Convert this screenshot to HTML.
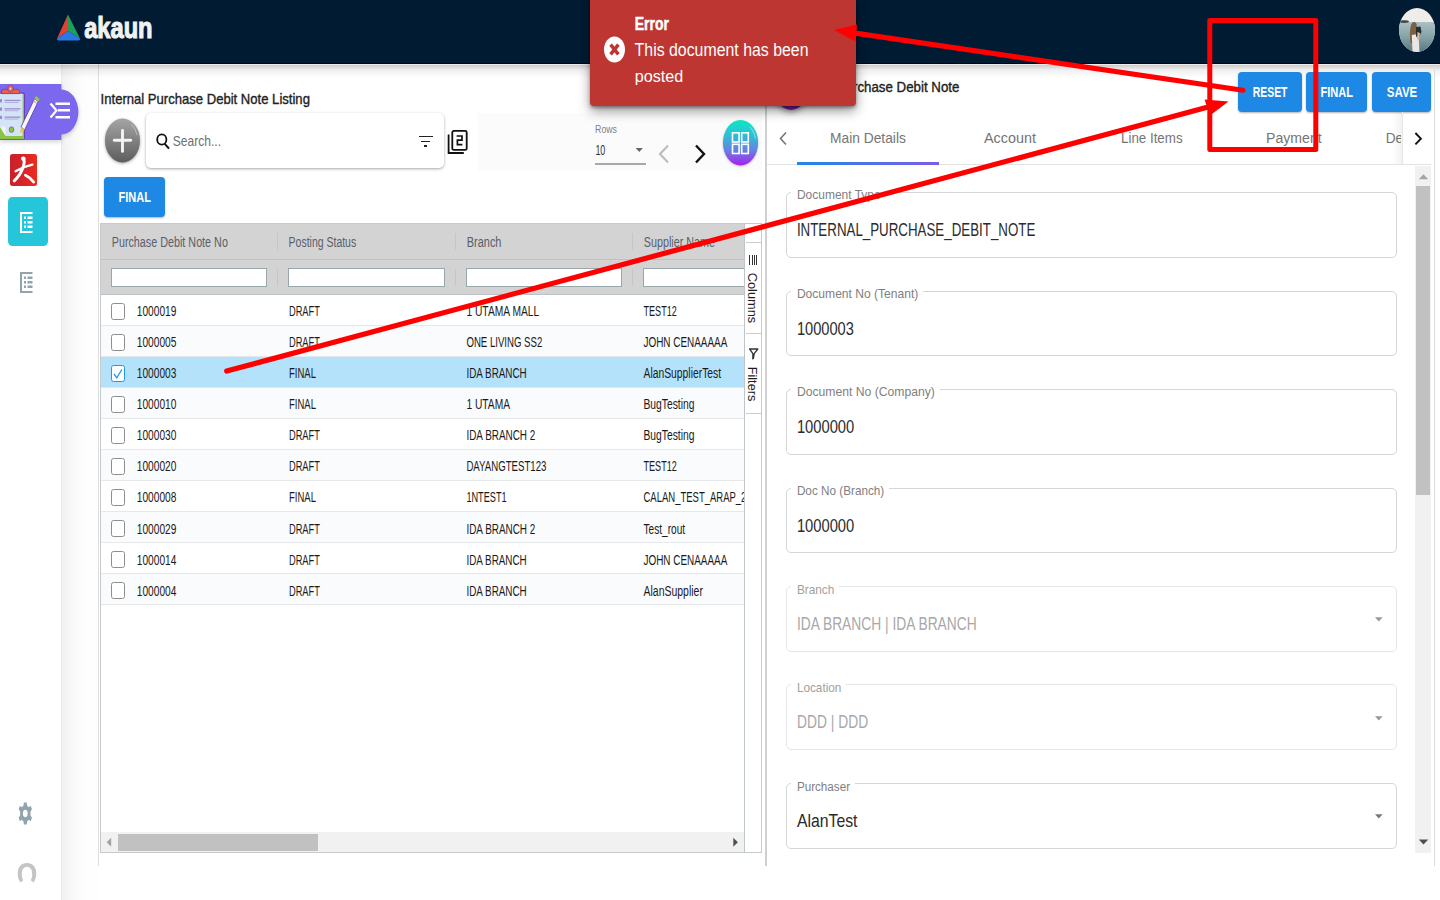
<!DOCTYPE html>
<html><head><meta charset="utf-8"><title>akaun</title>
<style>
html,body{margin:0;padding:0;width:1440px;height:900px;overflow:hidden;background:#fff;}
body{position:relative;font-family:"Liberation Sans",sans-serif;}
div{position:absolute;box-sizing:border-box;}
.t{white-space:nowrap;}
.ts{position:absolute;left:0;top:0;overflow:visible;font-family:"Liberation Sans",sans-serif;white-space:pre;}
</style></head><body>
<div style="left:0.00px;top:0.00px;width:1440.00px;height:900.00px;background:#fff;"></div>
<div style="left:61.00px;top:64.00px;width:37.00px;height:836.00px;background:linear-gradient(to right,#e8e8e8 0px,#f2f2f2 2px,#f6f6f6 8px,#fafafa 14px,#fdfdfd 22px,#fefefe 36px);"></div>
<div style="left:98.00px;top:64.00px;width:1.00px;height:802.00px;background:#dedede;"></div>
<div style="left:0.00px;top:64.00px;width:1440.00px;height:1.00px;background:rgba(80,70,50,0.10);"></div>
<div style="left:0.00px;top:65.00px;width:1440.00px;height:13.00px;background:linear-gradient(to bottom,rgba(0,0,0,0.2),rgba(0,0,0,0.06) 40%,rgba(0,0,0,0));"></div>
<div style="left:0.00px;top:0.00px;width:1440.00px;height:64.00px;background:#011b33;border-bottom:1.2px solid #00061a;box-sizing:border-box;"></div>
<svg style="position:absolute;left:55px;top:12px;" width="28" height="30" viewBox="0 0 28 30" preserveAspectRatio="none">
<polygon points="13,2.6 2,26.5 13,19" fill="#e3412f"/>
<polygon points="13,2.6 25,26.5 13,19" fill="#1e9e58"/>
<path d="M2,26.5 L13,19 L25,26.5 Q25.5,28.5 23.5,28.6 L3.5,28.6 Q1.5,28.5 2,26.5 Z" fill="#2a78e4"/>
</svg>
<svg class="ts" width="1" height="1" style=""><text transform="translate(84.20,38.20) scale(0.9985,1.2500)" font-size="23.704" fill="#f2f2f2" font-weight="bold" stroke="#f2f2f2" stroke-width="0.9">akaun</text></svg>
<svg style="position:absolute;left:1399px;top:8px;" width="36" height="44" viewBox="0 0 36 44" preserveAspectRatio="none">
<defs><clipPath id="av"><ellipse cx="18" cy="22" rx="18" ry="22"/></clipPath>
<linearGradient id="sea" x1="0" y1="0" x2="0" y2="1"><stop offset="0" stop-color="#aac0c4"/><stop offset="0.5" stop-color="#86a2a6"/><stop offset="1" stop-color="#577a7e"/></linearGradient></defs>
<g clip-path="url(#av)">
<rect x="0" y="0" width="36" height="44" fill="#eeede9"/>
<rect x="0" y="14" width="36" height="30" fill="url(#sea)"/>
<ellipse cx="5" cy="13.6" rx="5" ry="1.4" fill="#3d4a43"/>
<path d="M13.4,14.5 Q16.5,13.2 17.6,16 L17.8,22 L16.8,30 L15,36 L11.5,35 L10.8,26 Q11,18 13.4,14.5 Z" fill="#7d5f43"/>
<path d="M12.8,27 L19.5,26 L20.5,44 L13.5,44 Z" fill="#e9e6e4"/>
<path d="M17,19 L21.5,18.5 L22.5,24 L19,31 L17,28 Z" fill="#27302e"/>
<path d="M18.5,24 L21,25 L20,33 L18,31 Z" fill="#d8b79c"/>
</g>
</svg>
<svg style="position:absolute;left:0px;top:84px;filter:drop-shadow(0 2px 2px rgba(0,0,0,0.18));" width="80" height="57" viewBox="0 0 80 57" preserveAspectRatio="none">
<path d="M0,0 L61.4,0 L61.4,5.5 A17,22.5 0 0 1 61.4,50.5 L61.4,56 L0,56 Z" fill="#7b68ee"/>
</svg>
<svg style="position:absolute;left:0px;top:84px;" width="40" height="56" viewBox="0 0 40 56" preserveAspectRatio="none">
<rect x="-6" y="8.6" width="31" height="47" rx="2" fill="#6a3fb0"/>
<rect x="-5" y="10" width="29" height="45" fill="#8bc34a"/>
<rect x="-5" y="9.6" width="27.6" height="42.4" fill="#d2e4f5"/>
<path d="M-5,43 L0,43 L5.5,52 L-5,52 Z" fill="#8bc34a"/>
<path d="M0,42.5 L5.5,42.5 L5.5,51.5 Z" fill="#f4f4f4"/>
<path d="M1.5,9.6 L1.5,7 Q1.5,5.3 4,5.3 L17,5.3 Q19.6,5.3 19.6,7 L19.6,9.6 Z" fill="#e8604f" stroke="#6a3fb0" stroke-width="0.8"/>
<ellipse cx="10.5" cy="4.6" rx="3" ry="3.4" fill="#e8604f" stroke="#6a3fb0" stroke-width="0.6"/>
<ellipse cx="10.5" cy="4.8" rx="0.9" ry="1.2" fill="#d2e4f5"/>
<rect x="-1" y="15.2" width="3" height="3.2" fill="#9a87cc"/><rect x="4.5" y="15.8" width="16" height="1.3" fill="#9b8fd0"/><rect x="4.5" y="18" width="14" height="0.9" fill="#b1a8dc"/>
<rect x="-1" y="23.5" width="3" height="3.2" fill="#9a87cc"/><rect x="4.5" y="24.2" width="16" height="1.3" fill="#9b8fd0"/><rect x="4.5" y="26.3" width="14" height="0.9" fill="#b1a8dc"/>
<rect x="-1" y="31.8" width="3" height="3.2" fill="#9a87cc"/><rect x="4.5" y="32.5" width="16" height="1.3" fill="#9b8fd0"/><rect x="4.5" y="34.6" width="14" height="0.9" fill="#b1a8dc"/>
<ellipse cx="11.5" cy="45.6" rx="2.3" ry="2.8" fill="#8bc34a" stroke="#6a3fb0" stroke-width="0.6"/>
<path d="M34.6,14.6 L38.2,17.6 L24.6,46 L21,43 Z" fill="#f7f7f7" stroke="#6a3fb0" stroke-width="0.9"/>
<path d="M34.6,14.6 L38.2,17.6 L39.6,15 L36,12 Z" fill="#8bd23a"/>
<path d="M33.8,16.2 L37.4,19.2 L36.9,20.3 L33.3,17.3 Z" fill="#c9a27a"/>
<path d="M21,43 L24.6,46 L20.2,49.2 Z" fill="#f5c531"/>
</svg>
<svg style="position:absolute;left:48px;top:100px;" width="24" height="21" viewBox="0 0 24 21" preserveAspectRatio="none">
<polyline points="2.5,3.5 8.5,10.5 2.5,17.5" fill="none" stroke="#fff" stroke-width="2.2"/>
<rect x="7.5" y="2.5" width="14.5" height="2.5" fill="#fff"/>
<rect x="10" y="9" width="12" height="2.5" fill="#fff"/>
<rect x="7.5" y="16" width="14.5" height="2.5" fill="#fff"/>
</svg>
<svg style="position:absolute;left:10px;top:154px;" width="27" height="32" viewBox="0 0 27 32" preserveAspectRatio="none">
<defs><linearGradient id="rg" x1="0" y1="0" x2="1" y2="0"><stop offset="0" stop-color="#c9202a"/><stop offset="0.55" stop-color="#d8252a"/><stop offset="1" stop-color="#ef2b1c"/></linearGradient></defs>
<rect x="0" y="0" width="27" height="32" rx="2.5" fill="url(#rg)"/>
<g fill="none" stroke="#fff" stroke-linecap="round">
<path d="M13.8,5 Q15,9 12.6,14.5 Q10,21.5 4.2,26.8" stroke-width="3"/>
<path d="M5.6,17.2 Q13,12.6 22.4,10.6" stroke-width="2.4"/>
<path d="M15.4,21.2 Q20.5,23.5 23.6,28" stroke-width="2.8"/>
</g>
<ellipse cx="13.3" cy="4.6" rx="2.3" ry="2.2" fill="#fff"/>
</svg>
<div style="left:8.00px;top:197.00px;width:40.00px;height:49.00px;background:#26c6da;border-radius:4px/5px;"></div>
<svg style="position:absolute;left:19.6px;top:212px;" width="13.0" height="21" viewBox="0 0 13.0 21" preserveAspectRatio="none">
<rect x="0" y="0" width="2" height="21" fill="#ffffff"/>
<rect x="0" y="0" width="12.5" height="2" fill="#ffffff"/>
<rect x="0" y="19" width="12.5" height="2" fill="#ffffff"/>
<rect x="4" y="4.5" width="2" height="2.5" fill="#ffffff"/><rect x="7.5" y="4.5" width="5" height="2.5" fill="#ffffff"/>
<rect x="4" y="9" width="2" height="2.5" fill="#ffffff"/><rect x="7.5" y="9" width="5" height="2.5" fill="#ffffff"/>
<rect x="4" y="13.5" width="2" height="2.5" fill="#ffffff"/><rect x="7.5" y="13.5" width="5" height="2.5" fill="#ffffff"/>
</svg>
<svg style="position:absolute;left:19.6px;top:272px;" width="13.0" height="21" viewBox="0 0 13.0 21" preserveAspectRatio="none">
<rect x="0" y="0" width="2" height="21" fill="#90a4ae"/>
<rect x="0" y="0" width="12.5" height="2" fill="#90a4ae"/>
<rect x="0" y="19" width="12.5" height="2" fill="#90a4ae"/>
<rect x="4" y="4.5" width="2" height="2.5" fill="#90a4ae"/><rect x="7.5" y="4.5" width="5" height="2.5" fill="#90a4ae"/>
<rect x="4" y="9" width="2" height="2.5" fill="#90a4ae"/><rect x="7.5" y="9" width="5" height="2.5" fill="#90a4ae"/>
<rect x="4" y="13.5" width="2" height="2.5" fill="#90a4ae"/><rect x="7.5" y="13.5" width="5" height="2.5" fill="#90a4ae"/>
</svg>
<svg style="position:absolute;left:17px;top:801px;" width="17" height="25" viewBox="0 0 17 25" preserveAspectRatio="none">
<g transform="translate(8.3,12.5) scale(0.82,1.32)">
<path d="M-1.7,-8.3 L1.7,-8.3 L2.3,-5.9 L4.4,-4.8 L6.6,-5.9 L8.1,-3.3 L6.3,-1.6 L6.3,1.6 L8.1,3.3 L6.6,5.9 L4.4,4.8 L2.3,5.9 L1.7,8.3 L-1.7,8.3 L-2.3,5.9 L-4.4,4.8 L-6.6,5.9 L-8.1,3.3 L-6.3,1.6 L-6.3,-1.6 L-8.1,-3.3 L-6.6,-5.9 L-4.4,-4.8 L-2.3,-5.9 Z" fill="#90a4ae"/>
<circle cx="0" cy="0" r="2.9" fill="#fff"/>
</g></svg>
<svg style="position:absolute;left:17px;top:862px;" width="20" height="23" viewBox="0 0 20 23" preserveAspectRatio="none">
<path fill-rule="evenodd" d="M10,1 C15.5,1 19.3,5 19.3,11.5 C19.3,15.5 18,18.5 16.5,20.5 L13.8,18.2 C14.8,16.5 15.2,14 15.2,12 C15.2,7.8 13.2,4.8 10,4.8 C6.8,4.8 4.8,7.8 4.8,12 C4.8,14 5.2,16.5 6.2,18.2 L3.5,20.5 C2,18.5 0.7,15.5 0.7,11.5 C0.7,5 4.5,1 10,1 Z" fill="#c4c4c4"/>
</svg>
<svg class="ts" width="1" height="1" style=""><text transform="translate(100.60,104.10) scale(1.0821,1.2500)" font-size="12.093" fill="#222" stroke="#222" stroke-width="0.3">Internal Purchase Debit Note Listing</text></svg>
<div style="left:478.00px;top:113.00px;width:284.00px;height:58.00px;background:#fbfbfb;"></div>
<svg style="position:absolute;left:104px;top:117px;filter:drop-shadow(0 1px 1.5px rgba(0,0,0,0.35));" width="38" height="47" viewBox="0 0 38 47" preserveAspectRatio="none">
<defs><linearGradient id="ag" x1="0" y1="0" x2="0" y2="1"><stop offset="0" stop-color="#a5a5a5"/><stop offset="1" stop-color="#5d5d5d"/></linearGradient></defs>
<ellipse cx="18.5" cy="23.5" rx="17.5" ry="22" fill="url(#ag)"/>
<path d="M27.3,7.4 Q31.5,11 33.3,18.2" fill="none" stroke="#e0e0e0" stroke-width="0.7" opacity="0.8"/>
<line x1="18.5" y1="13.4" x2="18.5" y2="34.4" stroke="#f4f4f4" stroke-width="2.9" stroke-linecap="round"/>
<line x1="10.3" y1="23.3" x2="26.7" y2="23.3" stroke="#f4f4f4" stroke-width="2.9" stroke-linecap="round"/>
</svg>
<div style="left:146.30px;top:113.20px;width:297.70px;height:54.40px;background:#fff;border-radius:5px;box-shadow:0 1px 3px rgba(0,0,0,0.35);"></div>
<svg style="position:absolute;left:155px;top:133px;" width="17" height="17" viewBox="0 0 17 17" preserveAspectRatio="none">
<ellipse cx="6.8" cy="6.5" rx="4.6" ry="5.2" fill="none" stroke="#111" stroke-width="1.8"/>
<line x1="9.8" y1="10.8" x2="14" y2="15.6" stroke="#111" stroke-width="2"/>
</svg>
<svg class="ts" width="1" height="1" style=""><text transform="translate(172.80,146.10) scale(0.9964,1.2500)" font-size="12.093" fill="#707070">Search...</text></svg>
<div style="left:419.00px;top:136.10px;width:14.00px;height:1.30px;background:#222;"></div>
<div style="left:421.40px;top:140.70px;width:9.10px;height:1.20px;background:#222;"></div>
<div style="left:424.30px;top:145.30px;width:3.20px;height:1.30px;background:#222;"></div>
<svg style="position:absolute;left:447px;top:129px;" width="22" height="26" viewBox="0 0 22 26" preserveAspectRatio="none">
<path d="M1.6,5.5 L1.6,24 L16.8,24" fill="none" stroke="#111" stroke-width="1.8"/>
<rect x="5.3" y="1.9" width="14.4" height="19" rx="1.5" fill="none" stroke="#111" stroke-width="1.8"/>
<path d="M9.6,7 L15,7 L15,11.2 L10.4,11.2 L10.4,15.6 L15.4,15.6" fill="none" stroke="#111" stroke-width="1.7"/>
</svg>
<svg class="ts" width="1" height="1" style=""><text transform="translate(595.10,132.90) scale(1.0320,1.2500)" font-size="8.489" fill="#808080">Rows</text></svg>
<svg class="ts" width="1" height="1" style=""><text transform="translate(595.40,154.70) scale(0.7236,1.2500)" font-size="12.326" fill="#333">10</text></svg>
<svg style="position:absolute;left:635px;top:147px;" width="9" height="6" viewBox="0 0 9 6" preserveAspectRatio="none"><polygon points="0.7,1 7.8,1 4.25,5" fill="#666"/></svg>
<div style="left:595.10px;top:163.30px;width:50.80px;height:1.30px;background:#a8a8a8;"></div>
<svg style="position:absolute;left:657px;top:143px;" width="14" height="23" viewBox="0 0 14 23" preserveAspectRatio="none"><polyline points="11,2.5 3,11 11,19.5" fill="none" stroke="#bdbdbd" stroke-width="2.2"/></svg>
<svg style="position:absolute;left:693px;top:143px;" width="14" height="23" viewBox="0 0 14 23" preserveAspectRatio="none"><polyline points="3,2.5 11,11 3,19.5" fill="none" stroke="#111" stroke-width="2.4"/></svg>
<svg style="position:absolute;left:721px;top:119px;filter:drop-shadow(0 1px 1px rgba(0,0,0,0.22));" width="39" height="48" viewBox="0 0 39 48" preserveAspectRatio="none">
<defs><linearGradient id="gg" x1="0" y1="0" x2="0" y2="1"><stop offset="0" stop-color="#0aeac6"/><stop offset="0.38" stop-color="#33b8d6"/><stop offset="0.68" stop-color="#6a7ee2"/><stop offset="1" stop-color="#a81ff0"/></linearGradient></defs>
<ellipse cx="19.5" cy="23.7" rx="17.6" ry="22.7" fill="url(#gg)"/>
<path d="M28.5,7.8 Q33,11.5 34.4,19.6" fill="none" stroke="#a8f8f0" stroke-width="0.9" opacity="0.8"/>
<rect x="11.5" y="13.8" width="6.6" height="9.2" fill="none" stroke="#fff" stroke-width="1.6"/>
<rect x="20.7" y="13.8" width="6.6" height="9.2" fill="none" stroke="#fff" stroke-width="1.6"/>
<rect x="11.5" y="25.3" width="6.6" height="9.2" fill="none" stroke="#fff" stroke-width="1.6"/>
<rect x="20.7" y="25.3" width="6.6" height="9.2" fill="none" stroke="#fff" stroke-width="1.6"/>
</svg>
<div style="left:104.00px;top:177.20px;width:61.30px;height:39.70px;background:#1e88e5;border-radius:4px;box-shadow:0 1px 2px rgba(0,0,0,0.3);"></div>
<svg class="ts" width="1" height="1" style=""><text transform="translate(118.60,201.60) scale(0.9097,1.2500)" font-size="12.093" fill="#fff" font-weight="bold">FINAL</text></svg>
<div style="left:100.40px;top:222.80px;width:661.90px;height:630.20px;background:#fff;border:1px solid #c4cacd;box-sizing:border-box;"></div>
<div style="left:101.40px;top:223.80px;width:643.00px;height:71.10px;background:#d3d3d3;"></div>
<div style="left:101.40px;top:259.00px;width:643.00px;height:1.20px;background:#bcc3c6;"></div>
<div style="left:101.40px;top:294.20px;width:643.00px;height:1.00px;background:#bcc3c6;"></div>
<div style="left:276.90px;top:233.00px;width:1.00px;height:16.50px;background:#c4c6c8;"></div>
<div style="left:276.90px;top:269.00px;width:1.00px;height:16.50px;background:#c4c6c8;"></div>
<div style="left:455.10px;top:233.00px;width:1.00px;height:16.50px;background:#c4c6c8;"></div>
<div style="left:455.10px;top:269.00px;width:1.00px;height:16.50px;background:#c4c6c8;"></div>
<div style="left:632.00px;top:233.00px;width:1.00px;height:16.50px;background:#c4c6c8;"></div>
<div style="left:632.00px;top:269.00px;width:1.00px;height:16.50px;background:#c4c6c8;"></div>
<svg class="ts" width="1" height="1" style=""><text transform="translate(111.70,247.10) scale(0.9367,1.2500)" font-size="11.512" fill="#59606a">Purchase Debit Note No</text></svg>
<svg class="ts" width="1" height="1" style=""><text transform="translate(288.60,247.10) scale(0.9118,1.2500)" font-size="11.512" fill="#59606a">Posting Status</text></svg>
<svg class="ts" width="1" height="1" style=""><text transform="translate(466.80,247.10) scale(0.9509,1.2500)" font-size="11.512" fill="#59606a">Branch</text></svg>
<svg class="ts" width="1" height="1" style=""><text transform="translate(643.70,247.10) scale(0.9376,1.2500)" font-size="11.512" fill="#59606a">Supplier Name</text></svg>
<div style="left:110.90px;top:268.30px;width:155.80px;height:18.30px;background:#fff;border:1.3px solid #98a7a9;box-sizing:border-box;"></div>
<div style="left:287.80px;top:268.30px;width:157.10px;height:18.30px;background:#fff;border:1.3px solid #98a7a9;box-sizing:border-box;"></div>
<div style="left:466.00px;top:268.30px;width:155.80px;height:18.30px;background:#fff;border:1.3px solid #98a7a9;box-sizing:border-box;"></div>
<div style="left:642.90px;top:268.30px;width:101.50px;height:18.30px;background:#fff;border:1.3px solid #98a7a9;box-sizing:border-box;border-right:none;"></div>
<div style="left:101.4px;top:295px;width:643px;height:320px;overflow:hidden;">
<div style="left:0.00px;top:0.00px;width:643.00px;height:31.03px;background:#ffffff;"></div>
<div style="left:0.00px;top:30.03px;width:643.00px;height:1.00px;background:#e6e8ea;"></div>
<div style="left:0.00px;top:31.03px;width:643.00px;height:31.03px;background:#fafbfd;"></div>
<div style="left:0.00px;top:61.06px;width:643.00px;height:1.00px;background:#e6e8ea;"></div>
<div style="left:0.00px;top:62.06px;width:643.00px;height:31.03px;background:#b4e2fb;"></div>
<div style="left:0.00px;top:92.09px;width:643.00px;height:1.00px;background:#e6e8ea;"></div>
<div style="left:0.00px;top:93.09px;width:643.00px;height:31.03px;background:#fafbfd;"></div>
<div style="left:0.00px;top:123.12px;width:643.00px;height:1.00px;background:#e6e8ea;"></div>
<div style="left:0.00px;top:124.12px;width:643.00px;height:31.03px;background:#ffffff;"></div>
<div style="left:0.00px;top:154.15px;width:643.00px;height:1.00px;background:#e6e8ea;"></div>
<div style="left:0.00px;top:155.15px;width:643.00px;height:31.03px;background:#fafbfd;"></div>
<div style="left:0.00px;top:185.18px;width:643.00px;height:1.00px;background:#e6e8ea;"></div>
<div style="left:0.00px;top:186.18px;width:643.00px;height:31.03px;background:#ffffff;"></div>
<div style="left:0.00px;top:216.21px;width:643.00px;height:1.00px;background:#e6e8ea;"></div>
<div style="left:0.00px;top:217.21px;width:643.00px;height:31.03px;background:#fafbfd;"></div>
<div style="left:0.00px;top:247.24px;width:643.00px;height:1.00px;background:#e6e8ea;"></div>
<div style="left:0.00px;top:248.24px;width:643.00px;height:31.03px;background:#ffffff;"></div>
<div style="left:0.00px;top:278.27px;width:643.00px;height:1.00px;background:#e6e8ea;"></div>
<div style="left:0.00px;top:279.27px;width:643.00px;height:31.03px;background:#fafbfd;"></div>
<div style="left:0.00px;top:309.30px;width:643.00px;height:1.00px;background:#e6e8ea;"></div>
</div>
<div style="left:111.20px;top:302.60px;width:14.20px;height:17.40px;border:1.3px solid #8e8e8e;border-radius:2.5px;box-sizing:border-box;background:#fff;"></div>
<svg class="ts" width="1" height="1" style=""><text transform="translate(136.80,316.30) scale(0.8922,1.2500)" font-size="11.396" fill="#1a1a1a">1000019</text></svg>
<svg class="ts" width="1" height="1" style=""><text transform="translate(289.00,316.30) scale(0.8131,1.2500)" font-size="11.396" fill="#1a1a1a">DRAFT</text></svg>
<svg class="ts" width="1" height="1" style=""><text transform="translate(466.40,316.30) scale(0.9017,1.2500)" font-size="11.396" fill="#1a1a1a">1 UTAMA MALL</text></svg>
<div style="left:0;top:0;width:744.4px;height:900px;overflow:hidden;">
<svg class="ts" width="1" height="1" style=""><text transform="translate(643.50,316.30) scale(0.7962,1.2500)" font-size="11.396" fill="#1a1a1a">TEST12</text></svg>
</div>
<div style="left:111.20px;top:333.63px;width:14.20px;height:17.40px;border:1.3px solid #8e8e8e;border-radius:2.5px;box-sizing:border-box;background:#fff;"></div>
<svg class="ts" width="1" height="1" style=""><text transform="translate(136.80,347.33) scale(0.8922,1.2500)" font-size="11.396" fill="#1a1a1a">1000005</text></svg>
<svg class="ts" width="1" height="1" style=""><text transform="translate(289.00,347.33) scale(0.8131,1.2500)" font-size="11.396" fill="#1a1a1a">DRAFT</text></svg>
<svg class="ts" width="1" height="1" style=""><text transform="translate(466.40,347.33) scale(0.8453,1.2500)" font-size="11.396" fill="#1a1a1a">ONE LIVING SS2</text></svg>
<div style="left:0;top:0;width:744.4px;height:900px;overflow:hidden;">
<svg class="ts" width="1" height="1" style=""><text transform="translate(643.50,347.33) scale(0.8723,1.2500)" font-size="11.396" fill="#1a1a1a">JOHN CENAAAAA</text></svg>
</div>
<div style="left:111.20px;top:364.66px;width:14.20px;height:17.40px;border:1.3px solid #2196f3;border-radius:2.5px;box-sizing:border-box;background:#fff;"></div>
<svg style="position:absolute;left:111.2px;top:364.66px;" width="14.200000000000003" height="17.399999999999977" viewBox="0 0 14.200000000000003 17.399999999999977" preserveAspectRatio="none"><polyline points="3,9 5.8,12.8 10.8,4.5" fill="none" stroke="#2196f3" stroke-width="1.3"/></svg>
<svg class="ts" width="1" height="1" style=""><text transform="translate(136.80,378.36) scale(0.8922,1.2500)" font-size="11.396" fill="#1a1a1a">1000003</text></svg>
<svg class="ts" width="1" height="1" style=""><text transform="translate(289.00,378.36) scale(0.8357,1.2500)" font-size="11.396" fill="#1a1a1a">FINAL</text></svg>
<svg class="ts" width="1" height="1" style=""><text transform="translate(466.40,378.36) scale(0.8668,1.2500)" font-size="11.396" fill="#1a1a1a">IDA BRANCH</text></svg>
<div style="left:0;top:0;width:744.4px;height:900px;overflow:hidden;">
<svg class="ts" width="1" height="1" style=""><text transform="translate(643.50,378.36) scale(0.9085,1.2500)" font-size="11.396" fill="#1a1a1a">AlanSupplierTest</text></svg>
</div>
<div style="left:111.20px;top:395.69px;width:14.20px;height:17.40px;border:1.3px solid #8e8e8e;border-radius:2.5px;box-sizing:border-box;background:#fff;"></div>
<svg class="ts" width="1" height="1" style=""><text transform="translate(136.80,409.39) scale(0.8922,1.2500)" font-size="11.396" fill="#1a1a1a">1000010</text></svg>
<svg class="ts" width="1" height="1" style=""><text transform="translate(289.00,409.39) scale(0.8357,1.2500)" font-size="11.396" fill="#1a1a1a">FINAL</text></svg>
<svg class="ts" width="1" height="1" style=""><text transform="translate(466.40,409.39) scale(0.9002,1.2500)" font-size="11.396" fill="#1a1a1a">1 UTAMA</text></svg>
<div style="left:0;top:0;width:744.4px;height:900px;overflow:hidden;">
<svg class="ts" width="1" height="1" style=""><text transform="translate(643.50,409.39) scale(0.9041,1.2500)" font-size="11.396" fill="#1a1a1a">BugTesting</text></svg>
</div>
<div style="left:111.20px;top:426.72px;width:14.20px;height:17.40px;border:1.3px solid #8e8e8e;border-radius:2.5px;box-sizing:border-box;background:#fff;"></div>
<svg class="ts" width="1" height="1" style=""><text transform="translate(136.80,440.42) scale(0.8922,1.2500)" font-size="11.396" fill="#1a1a1a">1000030</text></svg>
<svg class="ts" width="1" height="1" style=""><text transform="translate(289.00,440.42) scale(0.8131,1.2500)" font-size="11.396" fill="#1a1a1a">DRAFT</text></svg>
<svg class="ts" width="1" height="1" style=""><text transform="translate(466.40,440.42) scale(0.8706,1.2500)" font-size="11.396" fill="#1a1a1a">IDA BRANCH 2</text></svg>
<div style="left:0;top:0;width:744.4px;height:900px;overflow:hidden;">
<svg class="ts" width="1" height="1" style=""><text transform="translate(643.50,440.42) scale(0.9041,1.2500)" font-size="11.396" fill="#1a1a1a">BugTesting</text></svg>
</div>
<div style="left:111.20px;top:457.75px;width:14.20px;height:17.40px;border:1.3px solid #8e8e8e;border-radius:2.5px;box-sizing:border-box;background:#fff;"></div>
<svg class="ts" width="1" height="1" style=""><text transform="translate(136.80,471.45) scale(0.8922,1.2500)" font-size="11.396" fill="#1a1a1a">1000020</text></svg>
<svg class="ts" width="1" height="1" style=""><text transform="translate(289.00,471.45) scale(0.8131,1.2500)" font-size="11.396" fill="#1a1a1a">DRAFT</text></svg>
<svg class="ts" width="1" height="1" style=""><text transform="translate(466.40,471.45) scale(0.8458,1.2500)" font-size="11.396" fill="#1a1a1a">DAYANGTEST123</text></svg>
<div style="left:0;top:0;width:744.4px;height:900px;overflow:hidden;">
<svg class="ts" width="1" height="1" style=""><text transform="translate(643.50,471.45) scale(0.7962,1.2500)" font-size="11.396" fill="#1a1a1a">TEST12</text></svg>
</div>
<div style="left:111.20px;top:488.78px;width:14.20px;height:17.40px;border:1.3px solid #8e8e8e;border-radius:2.5px;box-sizing:border-box;background:#fff;"></div>
<svg class="ts" width="1" height="1" style=""><text transform="translate(136.80,502.48) scale(0.8922,1.2500)" font-size="11.396" fill="#1a1a1a">1000008</text></svg>
<svg class="ts" width="1" height="1" style=""><text transform="translate(289.00,502.48) scale(0.8357,1.2500)" font-size="11.396" fill="#1a1a1a">FINAL</text></svg>
<svg class="ts" width="1" height="1" style=""><text transform="translate(466.40,502.48) scale(0.8036,1.2500)" font-size="11.396" fill="#1a1a1a">1NTEST1</text></svg>
<div style="left:0;top:0;width:744.4px;height:900px;overflow:hidden;">
<svg class="ts" width="1" height="1" style=""><text transform="translate(643.50,502.48) scale(0.8338,1.2500)" font-size="11.396" fill="#1a1a1a">CALAN_TEST_ARAP_2</text></svg>
</div>
<div style="left:111.20px;top:519.81px;width:14.20px;height:17.40px;border:1.3px solid #8e8e8e;border-radius:2.5px;box-sizing:border-box;background:#fff;"></div>
<svg class="ts" width="1" height="1" style=""><text transform="translate(136.80,533.51) scale(0.8922,1.2500)" font-size="11.396" fill="#1a1a1a">1000029</text></svg>
<svg class="ts" width="1" height="1" style=""><text transform="translate(289.00,533.51) scale(0.8131,1.2500)" font-size="11.396" fill="#1a1a1a">DRAFT</text></svg>
<svg class="ts" width="1" height="1" style=""><text transform="translate(466.40,533.51) scale(0.8706,1.2500)" font-size="11.396" fill="#1a1a1a">IDA BRANCH 2</text></svg>
<div style="left:0;top:0;width:744.4px;height:900px;overflow:hidden;">
<svg class="ts" width="1" height="1" style=""><text transform="translate(643.50,533.51) scale(0.8893,1.2500)" font-size="11.396" fill="#1a1a1a">Test_rout</text></svg>
</div>
<div style="left:111.20px;top:550.84px;width:14.20px;height:17.40px;border:1.3px solid #8e8e8e;border-radius:2.5px;box-sizing:border-box;background:#fff;"></div>
<svg class="ts" width="1" height="1" style=""><text transform="translate(136.80,564.54) scale(0.8922,1.2500)" font-size="11.396" fill="#1a1a1a">1000014</text></svg>
<svg class="ts" width="1" height="1" style=""><text transform="translate(289.00,564.54) scale(0.8131,1.2500)" font-size="11.396" fill="#1a1a1a">DRAFT</text></svg>
<svg class="ts" width="1" height="1" style=""><text transform="translate(466.40,564.54) scale(0.8668,1.2500)" font-size="11.396" fill="#1a1a1a">IDA BRANCH</text></svg>
<div style="left:0;top:0;width:744.4px;height:900px;overflow:hidden;">
<svg class="ts" width="1" height="1" style=""><text transform="translate(643.50,564.54) scale(0.8723,1.2500)" font-size="11.396" fill="#1a1a1a">JOHN CENAAAAA</text></svg>
</div>
<div style="left:111.20px;top:581.87px;width:14.20px;height:17.40px;border:1.3px solid #8e8e8e;border-radius:2.5px;box-sizing:border-box;background:#fff;"></div>
<svg class="ts" width="1" height="1" style=""><text transform="translate(136.80,595.57) scale(0.8922,1.2500)" font-size="11.396" fill="#1a1a1a">1000004</text></svg>
<svg class="ts" width="1" height="1" style=""><text transform="translate(289.00,595.57) scale(0.8131,1.2500)" font-size="11.396" fill="#1a1a1a">DRAFT</text></svg>
<svg class="ts" width="1" height="1" style=""><text transform="translate(466.40,595.57) scale(0.8668,1.2500)" font-size="11.396" fill="#1a1a1a">IDA BRANCH</text></svg>
<div style="left:0;top:0;width:744.4px;height:900px;overflow:hidden;">
<svg class="ts" width="1" height="1" style=""><text transform="translate(643.50,595.57) scale(0.9193,1.2500)" font-size="11.396" fill="#1a1a1a">AlanSupplier</text></svg>
</div>
<div style="left:744.40px;top:222.80px;width:1.10px;height:630.20px;background:#bfc6c9;"></div>
<div style="left:745.50px;top:223.80px;width:15.80px;height:628.20px;background:#fff;"></div>
<div style="left:745.50px;top:241.50px;width:15.80px;height:1.00px;background:#c8cdd0;"></div>
<div style="left:745.50px;top:333.30px;width:15.80px;height:1.00px;background:#c8cdd0;"></div>
<div style="left:745.50px;top:413.00px;width:15.80px;height:1.00px;background:#c8cdd0;"></div>
<div style="left:749.30px;top:255.00px;width:1.00px;height:9.80px;background:#333;"></div>
<div style="left:751.60px;top:255.00px;width:1.00px;height:9.80px;background:#333;"></div>
<div style="left:753.90px;top:255.00px;width:1.00px;height:9.80px;background:#333;"></div>
<div style="left:756.20px;top:255.00px;width:1.00px;height:9.80px;background:#333;"></div>
<svg class="ts" width="1" height="1"><text transform="translate(748.40,272.70) rotate(90) scale(0.9915,1)" font-size="12.936" fill="#1e1e1e">Columns</text></svg>
<svg style="position:absolute;left:747px;top:346px;" width="13" height="15" viewBox="0 0 13 15" preserveAspectRatio="none"><path d="M2.6,3 L10.8,3 L7.2,7.6 L6.4,12.4 L5.8,12.8 L5.9,7.6 Z" fill="none" stroke="#333" stroke-width="1.3" stroke-linejoin="round"/></svg>
<svg class="ts" width="1" height="1"><text transform="translate(748.40,366.70) rotate(90) scale(0.9833,1)" font-size="12.936" fill="#1e1e1e">Filters</text></svg>
<div style="left:101.40px;top:832.00px;width:643.00px;height:20.00px;background:#f1f1f1;"></div>
<div style="left:117.50px;top:834.00px;width:200.70px;height:16.70px;background:#c1c1c1;"></div>
<svg style="position:absolute;left:105px;top:836px;" width="8" height="13" viewBox="0 0 8 13" preserveAspectRatio="none"><polygon points="6.2,1.8 6.2,10.8 1.6,6.3" fill="#a3a3a3"/></svg>
<svg style="position:absolute;left:731px;top:836px;" width="9" height="13" viewBox="0 0 9 13" preserveAspectRatio="none"><polygon points="2.3,1.8 2.3,10.8 6.9,6.3" fill="#505050"/></svg>
<div style="left:765.20px;top:64.00px;width:1.80px;height:802.00px;background:#d0d0d0;"></div>
<div style="left:1433.60px;top:64.00px;width:1.20px;height:802.00px;background:#dcdcdc;"></div>
<svg style="position:absolute;left:775px;top:62px;filter:drop-shadow(0 2px 3px rgba(0,0,0,0.4));" width="33" height="50" viewBox="0 0 33 50" preserveAspectRatio="none">
<defs><linearGradient id="pg" x1="0" y1="0" x2="0" y2="1"><stop offset="0" stop-color="#4527a0"/><stop offset="1" stop-color="#7b1fa2"/></linearGradient></defs>
<ellipse cx="16" cy="29" rx="15.5" ry="19" fill="url(#pg)"/></svg>
<svg class="ts" width="1" height="1" style=""><text transform="translate(788.73,92.40) scale(1.1207,1.2500)" font-size="11.861" fill="#222" stroke="#222" stroke-width="0.3">Internal Purchase Debit Note</text></svg>
<div style="left:1238.00px;top:72.00px;width:63.70px;height:39.50px;background:#1e88e5;border-radius:4px;box-shadow:0 1px 2px rgba(0,0,0,0.3);"></div>
<svg class="ts" width="1" height="1" style=""><text transform="translate(1252.70,96.50) scale(0.8466,1.2500)" font-size="12.326" fill="#fff" font-weight="bold">RESET</text></svg>
<div style="left:1306.10px;top:72.00px;width:60.80px;height:39.50px;background:#1e88e5;border-radius:4px;box-shadow:0 1px 2px rgba(0,0,0,0.3);"></div>
<svg class="ts" width="1" height="1" style=""><text transform="translate(1320.40,96.50) scale(0.8981,1.2500)" font-size="12.326" fill="#fff" font-weight="bold">FINAL</text></svg>
<div style="left:1372.30px;top:72.00px;width:58.80px;height:39.50px;background:#1e88e5;border-radius:4px;box-shadow:0 1px 2px rgba(0,0,0,0.3);"></div>
<svg class="ts" width="1" height="1" style=""><text transform="translate(1386.70,96.50) scale(0.9368,1.2500)" font-size="12.326" fill="#fff" font-weight="bold">SAVE</text></svg>
<div style="left:767.00px;top:164.20px;width:664.00px;height:1.20px;background:#e2e2e2;"></div>
<svg style="position:absolute;left:777px;top:130px;" width="13" height="17" viewBox="0 0 13 17" preserveAspectRatio="none"><polyline points="9,2.5 3.5,8.5 9,14.5" fill="none" stroke="#777" stroke-width="1.6"/></svg>
<svg class="ts" width="1" height="1" style=""><text transform="translate(830.00,143.00) scale(1.1411,1.2500)" font-size="12.093" fill="#757575">Main Details</text></svg>
<svg class="ts" width="1" height="1" style=""><text transform="translate(984.00,143.00) scale(1.1895,1.2500)" font-size="12.093" fill="#757575">Account</text></svg>
<svg class="ts" width="1" height="1" style=""><text transform="translate(1121.00,143.00) scale(1.1055,1.2500)" font-size="12.093" fill="#757575">Line Items</text></svg>
<svg class="ts" width="1" height="1" style=""><text transform="translate(1266.00,143.00) scale(1.1675,1.2500)" font-size="12.093" fill="#757575">Payment</text></svg>
<div style="left:0;top:0;width:1401px;height:200px;overflow:hidden;">
<svg class="ts" width="1" height="1" style=""><text transform="translate(1385.70,143.00) scale(1.1300,1.2500)" font-size="12.093" fill="#757575">Details</text></svg>
</div>
<div style="left:1402.20px;top:112.00px;width:1.00px;height:52.20px;background:#e6e6e6;"></div>
<div style="left:1392.00px;top:112.00px;width:10.20px;height:52.20px;background:linear-gradient(to right,rgba(0,0,0,0),rgba(0,0,0,0.05));"></div>
<svg style="position:absolute;left:1410px;top:128px;" width="14" height="22" viewBox="0 0 14 22" preserveAspectRatio="none"><polyline points="5.4,5 10.9,10.7 5.4,16.4" fill="none" stroke="#111" stroke-width="1.9"/></svg>
<div style="left:797.00px;top:162.00px;width:141.80px;height:2.80px;background:linear-gradient(to right,#1e88e5,#7c5ce8);"></div>
<div style="left:786.30px;top:192.00px;width:610.90px;height:65.70px;border:1.2px solid #d6d6d6;border-radius:5px;box-sizing:border-box;background:#fff;"></div>
<div style="left:791.30px;top:190.30px;width:94.42px;height:4.00px;background:#fff;"></div>
<svg class="ts" width="1" height="1" style=""><text transform="translate(796.90,198.90) scale(1.2000,1.2500)" font-size="10.000" fill="#808080">Document Type</text></svg>
<svg class="ts" width="1" height="1" style=""><text transform="translate(796.90,236.20) scale(0.9555,1.2500)" font-size="13.954" fill="#2b2b2b">INTERNAL_PURCHASE_DEBIT_NOTE</text></svg>
<div style="left:786.30px;top:290.50px;width:610.90px;height:65.70px;border:1.2px solid #d6d6d6;border-radius:5px;box-sizing:border-box;background:#fff;"></div>
<div style="left:791.30px;top:288.80px;width:132.20px;height:4.00px;background:#fff;"></div>
<svg class="ts" width="1" height="1" style=""><text transform="translate(796.90,297.70) scale(1.2087,1.2500)" font-size="10.000" fill="#808080">Document No (Tenant)</text></svg>
<svg class="ts" width="1" height="1" style=""><text transform="translate(796.90,334.70) scale(1.0488,1.2500)" font-size="13.954" fill="#2b2b2b">1000003</text></svg>
<div style="left:786.30px;top:389.10px;width:610.90px;height:65.70px;border:1.2px solid #d6d6d6;border-radius:5px;box-sizing:border-box;background:#fff;"></div>
<div style="left:791.30px;top:387.40px;width:148.70px;height:4.00px;background:#fff;"></div>
<svg class="ts" width="1" height="1" style=""><text transform="translate(796.90,396.30) scale(1.2178,1.2500)" font-size="10.000" fill="#808080">Document No (Company)</text></svg>
<svg class="ts" width="1" height="1" style=""><text transform="translate(796.90,433.30) scale(1.0561,1.2500)" font-size="13.954" fill="#2b2b2b">1000000</text></svg>
<div style="left:786.30px;top:487.50px;width:610.90px;height:65.70px;border:1.2px solid #d6d6d6;border-radius:5px;box-sizing:border-box;background:#fff;"></div>
<div style="left:791.30px;top:485.80px;width:98.00px;height:4.00px;background:#fff;"></div>
<svg class="ts" width="1" height="1" style=""><text transform="translate(796.90,494.70) scale(1.1739,1.2500)" font-size="10.000" fill="#808080">Doc No (Branch)</text></svg>
<svg class="ts" width="1" height="1" style=""><text transform="translate(796.90,531.70) scale(1.0561,1.2500)" font-size="13.954" fill="#2b2b2b">1000000</text></svg>
<div style="left:786.30px;top:586.00px;width:610.90px;height:65.70px;border:1.2px solid #e6e6e6;border-radius:5px;box-sizing:border-box;background:#fff;"></div>
<div style="left:791.30px;top:584.30px;width:48.00px;height:4.00px;background:#fff;"></div>
<svg class="ts" width="1" height="1" style=""><text transform="translate(796.90,593.80) scale(1.1798,1.2500)" font-size="10.000" fill="#a0a0a0">Branch</text></svg>
<svg class="ts" width="1" height="1" style=""><text transform="translate(796.90,629.90) scale(0.9881,1.2500)" font-size="13.954" fill="#a8a8a8">IDA BRANCH | IDA BRANCH</text></svg>
<svg style="position:absolute;left:1374px;top:616.3px;" width="10" height="7.0" viewBox="0 0 10 7.0" preserveAspectRatio="none"><polygon points="1,1.2 8.6,1.2 4.8,5.4" fill="#999"/></svg>
<div style="left:786.30px;top:684.20px;width:610.90px;height:65.70px;border:1.2px solid #e6e6e6;border-radius:5px;box-sizing:border-box;background:#fff;"></div>
<div style="left:791.30px;top:682.50px;width:55.10px;height:4.00px;background:#fff;"></div>
<svg class="ts" width="1" height="1" style=""><text transform="translate(796.90,692.10) scale(1.1772,1.2500)" font-size="10.000" fill="#a0a0a0">Location</text></svg>
<svg class="ts" width="1" height="1" style=""><text transform="translate(796.90,728.10) scale(0.9922,1.2500)" font-size="13.954" fill="#a8a8a8">DDD | DDD</text></svg>
<svg style="position:absolute;left:1374px;top:714.5px;" width="10" height="7.0" viewBox="0 0 10 7.0" preserveAspectRatio="none"><polygon points="1,1.2 8.6,1.2 4.8,5.4" fill="#999"/></svg>
<div style="left:786.30px;top:782.90px;width:610.90px;height:65.70px;border:1.2px solid #d6d6d6;border-radius:5px;box-sizing:border-box;background:#fff;"></div>
<div style="left:791.30px;top:781.20px;width:63.80px;height:4.00px;background:#fff;"></div>
<svg class="ts" width="1" height="1" style=""><text transform="translate(796.90,790.60) scale(1.1666,1.2500)" font-size="10.000" fill="#808080">Purchaser</text></svg>
<svg class="ts" width="1" height="1" style=""><text transform="translate(796.90,826.60) scale(1.1324,1.2500)" font-size="13.954" fill="#2b2b2b">AlanTest</text></svg>
<svg style="position:absolute;left:1374px;top:813.2px;" width="10" height="7.0" viewBox="0 0 10 7.0" preserveAspectRatio="none"><polygon points="1,1.2 8.6,1.2 4.8,5.4" fill="#777"/></svg>
<div style="left:1415.20px;top:165.50px;width:16.00px;height:687.30px;background:#f1f1f1;"></div>
<div style="left:1416.20px;top:186.00px;width:13.80px;height:308.80px;background:#c1c1c1;"></div>
<svg style="position:absolute;left:1417px;top:172px;" width="13" height="9" viewBox="0 0 13 9" preserveAspectRatio="none"><polygon points="1.8,7.2 11.2,7.2 6.5,2.2" fill="#a3a3a3"/></svg>
<svg style="position:absolute;left:1417px;top:837px;" width="13" height="10" viewBox="0 0 13 10" preserveAspectRatio="none"><polygon points="1.8,2.6 11.2,2.6 6.5,7.6" fill="#505050"/></svg>
<div style="left:590.00px;top:-5.00px;width:266.00px;height:110.80px;background:#bd3631;border-radius:4px;box-shadow:0 5px 12px rgba(0,0,0,0.42),0 2px 3px rgba(0,0,0,0.3);"></div>
<svg style="position:absolute;left:603px;top:36px;" width="23" height="27" viewBox="0 0 23 27" preserveAspectRatio="none">
<ellipse cx="11.5" cy="13.5" rx="10.5" ry="13" fill="#fff"/>
<path d="M7.6,8.7 L15.4,18.3 M15.4,8.7 L7.6,18.3" stroke="#bd3631" stroke-width="3.5"/>
</svg>
<svg class="ts" width="1" height="1" style=""><text transform="translate(634.80,29.50) scale(1.0024,1.2500)" font-size="13.954" fill="#fff" font-weight="bold" stroke="#fff" stroke-width="0.4">Error</text></svg>
<svg class="ts" width="1" height="1" style=""><text transform="translate(634.60,55.80) scale(1.1388,1.2500)" font-size="13.954" fill="#fff">This document has been</text></svg>
<svg class="ts" width="1" height="1" style=""><text transform="translate(634.80,82.40) scale(1.1604,1.2500)" font-size="13.937" fill="#fff">posted</text></svg>
<svg style="position:absolute;left:0px;top:0px;z-index:50;" width="1440" height="900" viewBox="0 0 1440 900" preserveAspectRatio="none">
<g stroke="#ff0000" fill="none" stroke-linecap="round">
<rect x="1209.8" y="20.5" width="106" height="129" stroke-width="5" stroke-linejoin="round"/>
<line x1="1243" y1="90.2" x2="850" y2="32.4" stroke-width="5.2"/>
<line x1="226.7" y1="371.1" x2="1210" y2="106.5" stroke-width="5.2"/>
</g>
<g fill="#ff0000">
<polygon points="834,30 857,24.5 855.5,41.5"/>
<polygon points="1228.5,101.5 1204.5,99.5 1210,115.5"/>
</g>
</svg>
</body></html>
